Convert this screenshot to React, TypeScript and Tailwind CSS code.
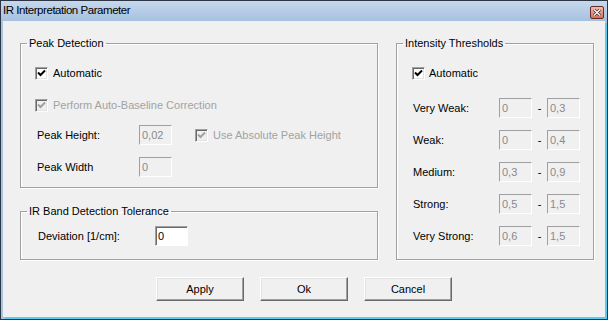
import type { ReactNode } from "react";

const font = { fontFamily: '"Liberation Sans", Arial, sans-serif' };

function CheckBox({ checked, disabled }: { checked?: boolean; disabled?: boolean }) {
  return (
    <span
      className={
        "flex h-[13px] w-[13px] shrink-0 items-center justify-center border border-t-[#a0a0a0] border-l-[#a0a0a0] border-b-white border-r-white shadow-[inset_1px_1px_0_#696969,inset_-1px_-1px_0_#e3e3e3] " +
        (disabled ? "bg-[#f0f0f0]" : "bg-white")
      }
    >
      {checked && (
        <svg width="9" height="9" viewBox="0 0 9 9">
          <path
            d="M1 3.5 L3.5 6 L8 1.5"
            fill="none"
            stroke={disabled ? "#a0a0a0" : "#000"}
            strokeWidth="2"
          />
        </svg>
      )}
    </span>
  );
}

function Field({ value, disabled = true }: { value: string; disabled?: boolean }) {
  return (
    <div
      className={
        "flex h-[20px] w-[33px] shrink-0 items-center border border-t-[#a0a0a0] border-l-[#a0a0a0] border-b-white border-r-white pl-[2px] text-[11px] " +
        (disabled
          ? "bg-[#f0f0f0] text-[#8a8a8a]"
          : "bg-white text-black shadow-[inset_1px_1px_0_#696969]")
      }
    >
      {value}
    </div>
  );
}

function Group({ title, children, className = "" }: { title: string; children: ReactNode; className?: string }) {
  return (
    <fieldset
      className={
        "border border-solid border-[#a0a0a0] shadow-[inset_1px_1px_0_#fff,1px_1px_0_#fff] " + className
      }
    >
      <legend className="ml-[6px] px-[2px] text-[11px] leading-[13px] text-black">{title}</legend>
      {children}
    </fieldset>
  );
}

function Btn({ label }: { label: string }) {
  return (
    <button className="h-[24px] w-[88px] border border-t-white border-l-white border-b-[#696969] border-r-[#696969] bg-[#f0f0f0] text-[11px] text-black shadow-[inset_-1px_-1px_0_#a0a0a0,inset_1px_1px_0_#e3e3e3]">
      {label}
    </button>
  );
}

const thresholds = [
  ["Very Weak:", "0", "0,3"],
  ["Weak:", "0", "0,4"],
  ["Medium:", "0,3", "0,9"],
  ["Strong:", "0,5", "1,5"],
  ["Very Strong:", "0,6", "1,5"],
];

export default function App() {
  return (
    <div style={font} className="flex h-[320px] w-[608px] flex-col border border-[#2b3543] bg-[#a9c4e0]">
      {/* title bar */}
      <div className="flex h-[20px] shrink-0 items-center justify-between bg-gradient-to-b from-[#c6d8ec] to-[#a6c1df] pl-[2px] pr-[3px]">
        <span className="text-[11.5px] tracking-[-0.45px] text-black">IR Interpretation Parameter</span>
        <div className="mt-[2px] flex h-[13px] w-[14px] items-center justify-center rounded-[2px] border border-[#6b2a26] bg-gradient-to-b from-[#eebcae] to-[#d0705e]">
          <svg width="8" height="7" viewBox="0 0 8 7">
            <path d="M1 0.5 L7 6.5 M7 0.5 L1 6.5" stroke="#3a1a18" strokeWidth="2.6" />
            <path d="M1 0.5 L7 6.5 M7 0.5 L1 6.5" stroke="#fff" strokeWidth="1.4" />
          </svg>
        </div>
      </div>

      {/* client area */}
      <div className="mx-[2px] mb-[2px] flex flex-1 flex-col bg-[#f0f0f0] shadow-[2px_2px_0_#5ccaf0]">
        <div className="flex gap-[18px] pl-[17px] pr-[11px] pt-[16px]">
          <div className="flex w-[358px] flex-col">
            <Group title="Peak Detection" className="pb-[10px]">
              <div className="ml-[14px] mt-[13px] flex h-[20px] items-center gap-[5px] text-[11px] text-black">
                <CheckBox checked />
                Automatic
              </div>
              <div className="ml-[14px] mt-[12px] flex h-[20px] items-center gap-[5px] text-[11px] text-[#a2a2a2]">
                <CheckBox checked disabled />
                Perform Auto-Baseline Correction
              </div>
              <div className="ml-[16px] mt-[10px] flex h-[20px] items-center text-[11px]">
                <span className="w-[102px] text-black">Peak Height:</span>
                <Field value="0,02" />
                <span className="ml-[23px] flex items-center gap-[5px] text-[#a2a2a2]">
                  <CheckBox checked disabled />
                  Use Absolute Peak Height
                </span>
              </div>
              <div className="ml-[16px] mt-[12px] flex h-[20px] items-center text-[11px]">
                <span className="w-[102px] text-black">Peak Width</span>
                <Field value="0" />
              </div>
            </Group>

            <Group title="IR Band Detection Tolerance" className="mt-[17px] pb-[13px]">
              <div className="ml-[17px] mt-[8px] flex h-[20px] items-center text-[11px]">
                <span className="w-[117px] text-black">Deviation [1/cm]:</span>
                <Field value="0" disabled={false} />
              </div>
            </Group>
          </div>

          <Group title="Intensity Thresholds" className="w-[198px]">
            <div className="ml-[15px] mt-[13px] flex h-[20px] items-center gap-[4px] text-[11px] text-black">
              <CheckBox checked />
              Automatic
            </div>
            <div className="mt-[15px] flex flex-col gap-[12px]">
              {thresholds.map(([label, lo, hi]) => (
                <div key={label} className="ml-[16px] flex h-[20px] items-center text-[11px]">
                  <span className="w-[86px] text-black">{label}</span>
                  <Field value={lo} />
                  <span className="w-[15px] text-center text-black">-</span>
                  <Field value={hi} />
                </div>
              ))}
            </div>
          </Group>
        </div>

        <div className="mt-[17px] flex justify-center gap-[16px]">
          <Btn label="Apply" />
          <Btn label="Ok" />
          <Btn label="Cancel" />
        </div>
      </div>
    </div>
  );
}
